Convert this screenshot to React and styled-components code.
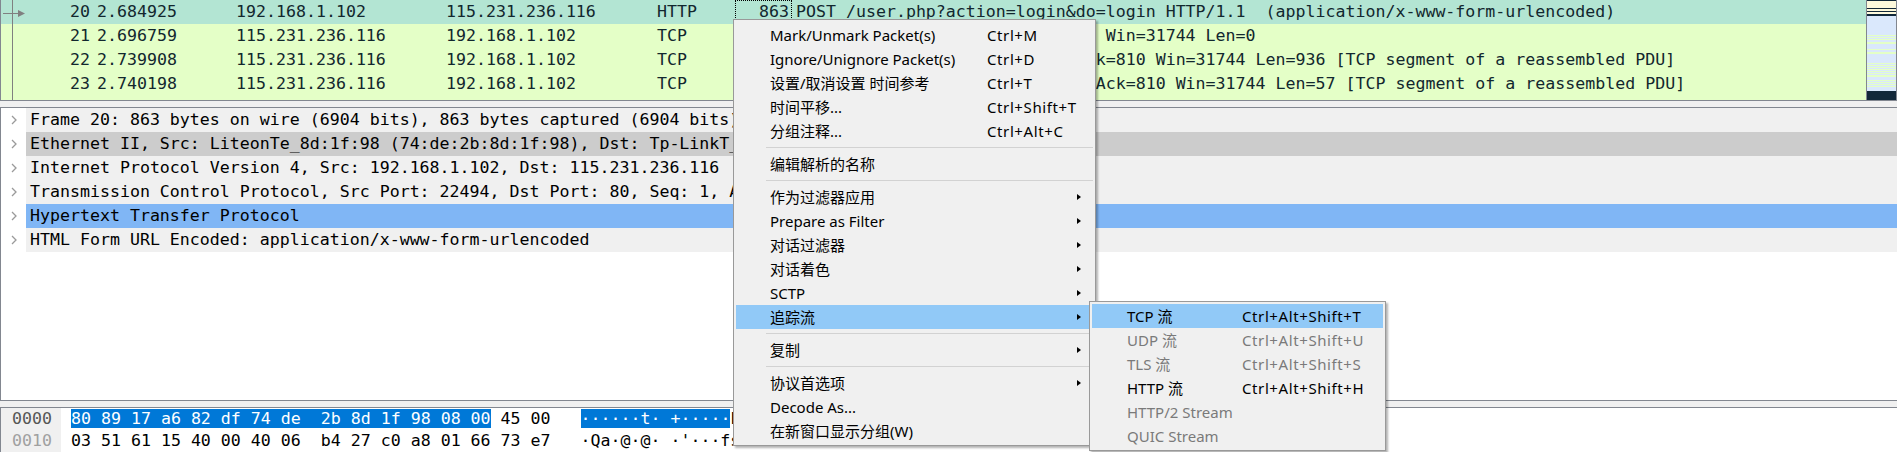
import styled, { createGlobalStyle } from 'styled-components'

const MONO = `"DejaVu Sans Mono", "Liberation Mono", monospace`
const UI = `"Noto Sans", "Noto Sans CJK SC", sans-serif`
const FRAME = '#828790'

const GlobalStyle = createGlobalStyle`
  html, body {
    margin: 0;
    padding: 0;
    overflow: hidden;
    background: #f0f0f0;
  }
  #root {
    width: 1897px;
    height: 452px;
  }
`

const Window = styled.div`
  position: relative;
  width: 1897px;
  height: 452px;
  display: flex;
  flex-direction: column;
  gap: 6px;
  overflow: hidden;
  background: #f0f0f0;
  font-family: ${MONO};
  font-size: 16.6px;
`

/* ---------- packet list ---------- */

const PacketList = styled.div`
  flex: none;
  height: 101px;
  box-sizing: border-box;
  display: flex;
  border: 1px solid ${FRAME};
  border-top: none;
  overflow: hidden;
`

const Rows = styled.div`
  flex: 1;
  background: #fff;
  overflow: hidden;
`

const PacketRow = styled.div`
  display: grid;
  grid-template-columns: 93px 139px 210px 211px 81px 57px 1fr;
  height: 24px;
  line-height: 24px;
  color: #12272e;
  background: ${({ $current }) => ($current ? '#b3e5d3' : '#e4ffc7')};
  white-space: pre;
`

const Cell = styled.div`
  position: relative;
  overflow: hidden;
  padding: 0 3px;
  text-align: ${({ $right }) => ($right ? 'right' : 'left')};
  ${({ $focus }) => $focus && `
    outline: 1px dotted #000;
    outline-offset: -1px;
  `}
`

const NoCell = styled(Cell)`
  padding-right: 4px;
  &::before {
    content: '';
    position: absolute;
    left: 11px;
    top: 0;
    bottom: 0;
    width: 1px;
    background: #808080;
  }
`

const InfoCell = styled(Cell)`
  padding-left: 4px;
`

const RelatedArrow = styled.svg`
  position: absolute;
  left: 1px;
  top: 0;
`

const Minimap = styled.div`
  flex: none;
  width: 29px;
  border-left: 1px solid ${FRAME};
  background: #dae8fc;
  line-height: 0;
`

/* ---------- packet details ---------- */

const Details = styled.div`
  flex: none;
  height: 294px;
  box-sizing: border-box;
  border-top: 1px solid ${FRAME};
  border-bottom: 1px solid ${FRAME};
  border-left: 1px solid ${FRAME};
  background: #fff;
  overflow: hidden;
`

const TreeRow = styled.div`
  display: grid;
  grid-template-columns: 25px 1fr;
  height: 24px;
  line-height: 24px;
  color: #000;
`

const Expander = styled.div`
  display: flex;
  align-items: center;
  justify-content: center;
  background: #fff;
`

const TreeLabel = styled.div`
  padding-left: 4px;
  white-space: pre;
  overflow: hidden;
  background: ${({ $state }) =>
    $state === 'selected' ? '#80b6f5' : $state === 'hover' ? '#cccccc' : '#f0f0f0'};
`

/* ---------- bytes ---------- */

const Bytes = styled.div`
  flex: 1;
  display: grid;
  grid-template-columns: 60px 1fr;
  border-top: 1px solid ${FRAME};
  border-left: 1px solid ${FRAME};
  background: #fff;
  overflow: hidden;
`

const OffsetColumn = styled.div`
  background: #f0f0f0;
`

const HexLine = styled.div`
  height: 22px;
  line-height: 22px;
  white-space: pre;
`

const Offset = styled(HexLine)`
  padding-left: 11px;
  color: ${({ $active }) => ($active ? '#555' : '#a0a0a0')};
`

const Dump = styled(HexLine)`
  padding-left: 10px;
  color: #000;
`

const Sel = styled.span`
  background: #0078d7;
  color: #fff;
`

/* ---------- context menu ---------- */

const Menu = styled.div`
  position: absolute;
  left: ${({ $left }) => $left}px;
  top: ${({ $top }) => $top}px;
  width: ${({ $width }) => $width}px;
  box-sizing: border-box;
  padding: ${({ $sub }) => ($sub ? '2px 2px 2px' : '3px 2px 2px')};
  background: #f0f0f0;
  border: 1px solid #999;
  box-shadow: 2px 2px 2px rgba(0, 0, 0, 0.3);
  font-family: ${UI};
  font-size: 15px;
  z-index: ${({ $sub }) => ($sub ? 3 : 2)};
`

const Item = styled.div`
  display: grid;
  grid-template-columns: ${({ $labelWidth }) => $labelWidth}px 1fr 12px;
  align-items: center;
  height: 24px;
  line-height: 24px;
  padding-left: ${({ $indent }) => $indent}px;
  padding-right: 8px;
  white-space: nowrap;
  color: ${({ $disabled }) => ($disabled ? '#7a7a7a' : '#000')};
  background: ${({ $active }) => ($active ? '#91c9f7' : 'transparent')};
`

const Shortcut = styled.span`
  letter-spacing: 0.6px;
`

const SubArrow = styled.span`
  justify-self: center;
  width: 0;
  height: 0;
  border-left: 4px solid #000;
  border-top: 3.5px solid transparent;
  border-bottom: 3.5px solid transparent;
`

const Separator = styled.div`
  height: 1px;
  margin: 4px 0 4px 30px;
  background: #d2d2d2;
`

const packets = [
  { no: 20, time: '2.684925', src: '192.168.1.102', dst: '115.231.236.116', proto: 'HTTP', len: 863,
    info: 'POST /user.php?action=login&do=login HTTP/1.1  (application/x-www-form-urlencoded)', current: true },
  { no: 21, time: '2.696759', src: '115.231.236.116', dst: '192.168.1.102', proto: 'TCP', len: 54,
    info: '80 → 22494 [ACK] Seq=1 Ack=810 Win=31744 Len=0' },
  { no: 22, time: '2.739908', src: '115.231.236.116', dst: '192.168.1.102', proto: 'TCP', len: 990,
    info: '80 → 22494 [PSH, ACK] Seq=1 Ack=810 Win=31744 Len=936 [TCP segment of a reassembled PDU]' },
  { no: 23, time: '2.740198', src: '115.231.236.116', dst: '192.168.1.102', proto: 'TCP', len: 111,
    info: '80 → 22494 [PSH, ACK] Seq=937 Ack=810 Win=31744 Len=57 [TCP segment of a reassembled PDU]' },
  { no: 24, time: '2.740263', src: '115.231.236.116', dst: '192.168.1.102', proto: 'HTTP', len: 374,
    info: 'HTTP/1.1 200 OK  (text/html)' },
]

const tree = [
  { text: 'Frame 20: 863 bytes on wire (6904 bits), 863 bytes captured (6904 bits) on interface 0' },
  { text: 'Ethernet II, Src: LiteonTe_8d:1f:98 (74:de:2b:8d:1f:98), Dst: Tp-LinkT_a6:82:df (80:89:17:a6:82:df)', state: 'hover' },
  { text: 'Internet Protocol Version 4, Src: 192.168.1.102, Dst: 115.231.236.116' },
  { text: 'Transmission Control Protocol, Src Port: 22494, Dst Port: 80, Seq: 1, Ack: 1, Len: 809' },
  { text: 'Hypertext Transfer Protocol', state: 'selected' },
  { text: 'HTML Form URL Encoded: application/x-www-form-urlencoded' },
]

const menuItems = [
  { label: 'Mark/Unmark Packet(s)', key: 'Ctrl+M' },
  { label: 'Ignore/Unignore Packet(s)', key: 'Ctrl+D' },
  { label: '设置/取消设置 时间参考', key: 'Ctrl+T' },
  { label: '时间平移...', key: 'Ctrl+Shift+T' },
  { label: '分组注释...', key: 'Ctrl+Alt+C' },
  { sep: true },
  { label: '编辑解析的名称' },
  { sep: true },
  { label: '作为过滤器应用', sub: true },
  { label: 'Prepare as Filter', sub: true },
  { label: '对话过滤器', sub: true },
  { label: '对话着色', sub: true },
  { label: 'SCTP', sub: true },
  { label: '追踪流', sub: true, active: true },
  { sep: true },
  { label: '复制', sub: true },
  { sep: true },
  { label: '协议首选项', sub: true },
  { label: 'Decode As...' },
  { label: '在新窗口显示分组(W)' },
]

const followItems = [
  { label: 'TCP 流', key: 'Ctrl+Alt+Shift+T', active: true },
  { label: 'UDP 流', key: 'Ctrl+Alt+Shift+U', disabled: true },
  { label: 'TLS 流', key: 'Ctrl+Alt+Shift+S', disabled: true },
  { label: 'HTTP 流', key: 'Ctrl+Alt+Shift+H' },
  { label: 'HTTP/2 Stream', disabled: true },
  { label: 'QUIC Stream', disabled: true },
]

const greenStripes = [35, 37, 39, 42, 43, 49, 52, 53, 63, 65, 67, 69, 71, 73, 75, 76, 80, 82, 84, 86]

const MinimapDrawing = () => (
  <svg width="29" height="100" viewBox="0 0 29 100">
    <rect x="0" y="0" width="29" height="100" fill="#dae8fc" />
    <rect x="0" y="0" width="29" height="14" fill="#fdf9dc" />
    <rect x="0" y="0" width="29" height="1" fill="#12283a" />
    <rect x="0" y="8" width="29" height="1" fill="#12283a" />
    <rect x="0" y="11" width="29" height="1" fill="#12283a" />
    <rect x="0" y="14" width="29" height="2" fill="#12283a" />
    {greenStripes.map(y => (
      <rect key={y} x="0" y={y} width="29" height="1" fill="#e4ffc7" />
    ))}
    <rect x="0" y="91" width="29" height="9" fill="#12283a" />
  </svg>
)

const Chevron = () => (
  <svg width="6" height="10" viewBox="0 0 6 10">
    <path d="M1 1 L5 5 L1 9" fill="none" stroke="#9a9a9a" strokeWidth="1.3" />
  </svg>
)

const ContextMenu = () => (
  <Menu $left={733} $top={19} $width={363}>
    {menuItems.map((item, i) =>
      item.sep ? (
        <Separator key={i} />
      ) : (
        <Item key={i} $labelWidth={217} $indent={34} $active={item.active}>
          <span>{item.label}</span>
          <Shortcut>{item.key || ''}</Shortcut>
          {item.sub ? <SubArrow /> : <span />}
        </Item>
      )
    )}
    <Menu $sub $left={355} $top={281} $width={297}>
      {followItems.map(item => (
        <Item key={item.label} $labelWidth={115} $indent={35} $active={item.active} $disabled={item.disabled}>
          <span>{item.label}</span>
          <Shortcut>{item.key || ''}</Shortcut>
          <span />
        </Item>
      ))}
    </Menu>
  </Menu>
)

const App = () => (
  <>
    <GlobalStyle />
    <Window>
      <PacketList>
        <Rows>
          {packets.map(p => (
            <PacketRow key={p.no} $current={p.current}>
              <NoCell $right>
                {p.current && (
                  <RelatedArrow width="24" height="24" viewBox="0 0 24 24">
                    <line x1="1" y1="13.5" x2="17" y2="13.5" stroke="#808080" strokeWidth="1" />
                    <polygon points="16,10 23,13.5 16,17" fill="#808080" />
                  </RelatedArrow>
                )}
                {p.no}
              </NoCell>
              <Cell>{p.time}</Cell>
              <Cell>{p.src}</Cell>
              <Cell>{p.dst}</Cell>
              <Cell>{p.proto}</Cell>
              <Cell $right $focus={p.current}>{p.len}</Cell>
              <InfoCell>{p.info}</InfoCell>
            </PacketRow>
          ))}
        </Rows>
        <Minimap>
          <MinimapDrawing />
        </Minimap>
      </PacketList>

      <Details>
        {tree.map(node => (
          <TreeRow key={node.text}>
            <Expander>
              <Chevron />
            </Expander>
            <TreeLabel $state={node.state}>{node.text}</TreeLabel>
          </TreeRow>
        ))}
      </Details>

      <Bytes>
        <OffsetColumn>
          <Offset $active>0000</Offset>
          <Offset>0010</Offset>
        </OffsetColumn>
        <div>
          <Dump>
            <Sel>80 89 17 a6 82 df 74 de  2b 8d 1f 98 08 00</Sel>
            {' 45 00   '}
            <Sel>······t· +·····</Sel>
            E·
          </Dump>
          <Dump>{"03 51 61 15 40 00 40 06  b4 27 c0 a8 01 66 73 e7   ·Qa·@·@· ·'···fs·"}</Dump>
        </div>
      </Bytes>

      <ContextMenu />
    </Window>
  </>
)

export default App
